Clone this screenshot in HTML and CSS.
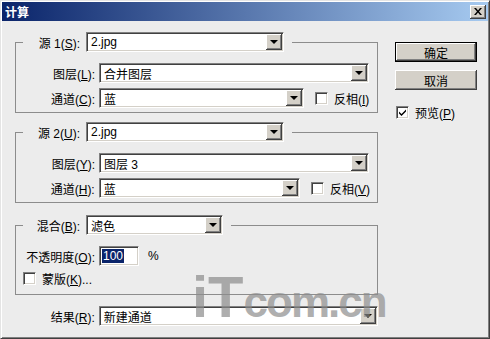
FILE: index.html
```html
<!DOCTYPE html>
<html lang="zh-CN">
<head>
<meta charset="UTF-8" />
<title>计算</title>
<link rel="stylesheet" href="styles.css">
</head>
<body>
  <div class="window">
    <div class="titlebar">
      <span class="title">计算</span>
      <span class="close">
        <svg width="8" height="7" viewBox="0 0 8 7"><path d="M0 0h2l2 2.5L6 0h2L5 3.5 8 7H6L4 4.5 2 7H0l3-3.5z" fill="#000"/></svg>
      </span>
    </div>
    <div class="dialog">
      <div class="main">
        <fieldset class="group">
          <legend><div class="head"><span class="hlabel">源 1(<u>S</u>):</span><div class="combo w-src"><span>2.jpg</span><i class="btn"></i></div></div></legend>
          <div class="row"><span class="rlabel">图层(<u>L</u>):</span><div class="combo w-layer"><span>合并图层</span><i class="btn"></i></div></div>
          <div class="row"><span class="rlabel">通道(<u>C</u>):</span><div class="combo w-chan"><span>蓝</span><i class="btn"></i></div><span class="check inv"></span><span class="ctext">反相(<u>I</u>)</span></div>
        </fieldset>

        <fieldset class="group g2">
          <legend><div class="head"><span class="hlabel">源 2(<u>U</u>):</span><div class="combo w-src"><span>2.jpg</span><i class="btn"></i></div></div></legend>
          <div class="row"><span class="rlabel">图层(<u>Y</u>):</span><div class="combo w-layer"><span>图层 3</span><i class="btn"></i></div></div>
          <div class="row"><span class="rlabel">通道(<u>H</u>):</span><div class="combo w-chan2"><span>蓝</span><i class="btn"></i></div><span class="check inv"></span><span class="ctext">反相(<u>V</u>)</span></div>
        </fieldset>

        <fieldset class="group g3">
          <legend><div class="head"><span class="hlabel">混合(<u>B</u>):</span><div class="combo w-blend"><span>滤色</span><i class="btn"></i></div></div></legend>
          <div class="row"><span class="rlabel">不透明度(<u>O</u>):</span><div class="field"><span class="sel">100</span></div><span class="pct">%</span></div>
          <div class="row crow"><span class="check"></span><span class="ctext">蒙版(<u>K</u>)...</span></div>
        </fieldset>

        <div class="row result"><span class="rlabel">结果(<u>R</u>):</span><div class="combo w-result"><span>新建通道</span><i class="btn"></i></div></div>
      </div>

      <div class="side">
        <div class="push default">确定</div>
        <div class="push">取消</div>
        <div class="preview"><span class="check checked">
          <svg width="7" height="7" viewBox="0 0 7 7"><path d="M0 2.5l2.5 2.5L7 0.5v2L2.5 7 0 4.5z" fill="#000"/></svg>
        </span><span class="ctext">预览(<u>P</u>)</span></div>
      </div>
    </div>
    <div class="watermark"><span class="big">iT</span><span class="small">com.cn</span></div>
  </div>
</body>
</html>
```

FILE: styles.css
```css
/* Reset & base */
* {
  box-sizing: border-box;
}
body {
  margin: 0;
  font: 12px "Liberation Sans", "Noto Sans CJK SC", sans-serif;
  color: #000;
}
u {
  text-decoration: underline;
}

/* Window frame */
.window {
  position: relative;
  width: 490px;
  height: 339px;
  overflow: hidden;
  background: #ececec;
  border: 1px solid;
  border-color: #e4e4e4 #404040 #404040 #e4e4e4;
  padding: 1px;
  box-shadow: inset 1px 1px 0 #fff, inset -1px -1px 0 #808080;
}
.titlebar {
  height: 19px;
  display: flex;
  align-items: center;
  justify-content: space-between;
  padding: 0 2px 0 3px;
  background: linear-gradient(to right, #0a246a, #a6caf0);
  color: #fff;
  font-weight: bold;
}
.close {
  width: 16px;
  height: 14px;
  display: flex;
  align-items: center;
  justify-content: center;
  background: #d4d0c8;
  box-shadow: inset -1px -1px #404040, inset 1px 1px #fff, inset -2px -2px #808080;
}

/* Layout */
.dialog {
  display: flex;
}
.main {
  margin-left: 13px;
  width: 363px;
}
.group {
  margin: 11px 0 0;
  width: 363px;
  min-inline-size: 0;
  border: 1px solid #8c8c8c;
  padding: 11px 7px 4px;
}
.g2 {
  margin-top: 9px;
}
.g3 {
  margin-top: 12px;
  padding-bottom: 8px;
}
legend {
  padding: 0 8px 0 0;
}
.head {
  display: flex;
  align-items: center;
  height: 20px;
}
.hlabel {
  width: 57px;
  margin-right: 6px;
  text-align: right;
  white-space: nowrap;
}
.row {
  display: flex;
  align-items: center;
  height: 20px;
}
.row + .row {
  margin-top: 5px;
}
.crow {
  height: 16px;
}
.g3 .row + .row {
  margin-top: 4px;
}
.rlabel {
  width: 72px;
  margin-right: 4px;
  text-align: right;
  white-space: nowrap;
}
.result {
  margin-top: 11px;
  margin-left: 8px;
}

/* Combo boxes */
.combo, .field {
  height: 20px;
  display: flex;
  align-items: center;
  justify-content: space-between;
  padding: 1px 1px 1px 4px;
  background: #fff;
  border: 1px solid;
  border-color: #808080 #fff #fff #808080;
  box-shadow: inset 1px 1px #404040, inset -1px -1px #d4d0c8;
  white-space: nowrap;
}
.combo .btn {
  width: 16px;
  height: 16px;
  display: flex;
  align-items: center;
  justify-content: center;
  background: #d4d0c8;
  box-shadow: inset -1px -1px #404040, inset 1px 1px #fff, inset -2px -2px #808080;
}
.combo .btn::after {
  content: "";
  border: 4px solid transparent;
  border-top-color: #000;
  border-bottom: 0;
}
.w-src { width: 198px; }
.w-layer { width: 270px; }
.w-chan { width: 205px; }
.w-chan2 { width: 202px; }
.w-blend { width: 137px; }
.w-result { width: 280px; }
.field {
  width: 40px;
  padding-left: 2px;
}
.sel {
  background: #0a246a;
  color: #fff;
  padding: 0 1px;
  line-height: 14px;
}
.pct {
  margin-left: 9px;
}

/* Checkboxes */
.check {
  width: 13px;
  height: 13px;
  flex: none;
  display: flex;
  align-items: center;
  justify-content: center;
  background: #fff;
  border: 1px solid;
  border-color: #808080 #fff #fff #808080;
  box-shadow: inset 1px 1px #404040, inset -1px -1px #d4d0c8;
}
.inv {
  margin-left: 11px;
}
.ctext {
  margin-left: 6px;
  white-space: nowrap;
}

/* Buttons */
.side {
  margin-left: 17px;
  width: 82px;
  padding-top: 21px;
}
.push {
  height: 20px;
  display: flex;
  align-items: center;
  justify-content: center;
  background: #d4d0c8;
  box-shadow: inset -1px -1px #404040, inset 1px 1px #fff, inset -2px -2px #808080;
}
.push + .push {
  margin-top: 8px;
}
.default {
  border: 1px solid #000;
}
.preview {
  display: flex;
  align-items: center;
  height: 16px;
  margin-top: 14px;
  padding-left: 1px;
}

/* Site watermark over the dialog */
.watermark {
  position: absolute;
  left: 191px;
  top: 262px;
  font-family: "Liberation Sans", sans-serif;
  font-weight: bold;
  color: rgba(140, 140, 140, 0.7);
  white-space: nowrap;
  pointer-events: none;
}
.watermark .big {
  font-size: 58px;
}
.watermark .small {
  font-size: 44px;
  letter-spacing: -2px;
}
```
